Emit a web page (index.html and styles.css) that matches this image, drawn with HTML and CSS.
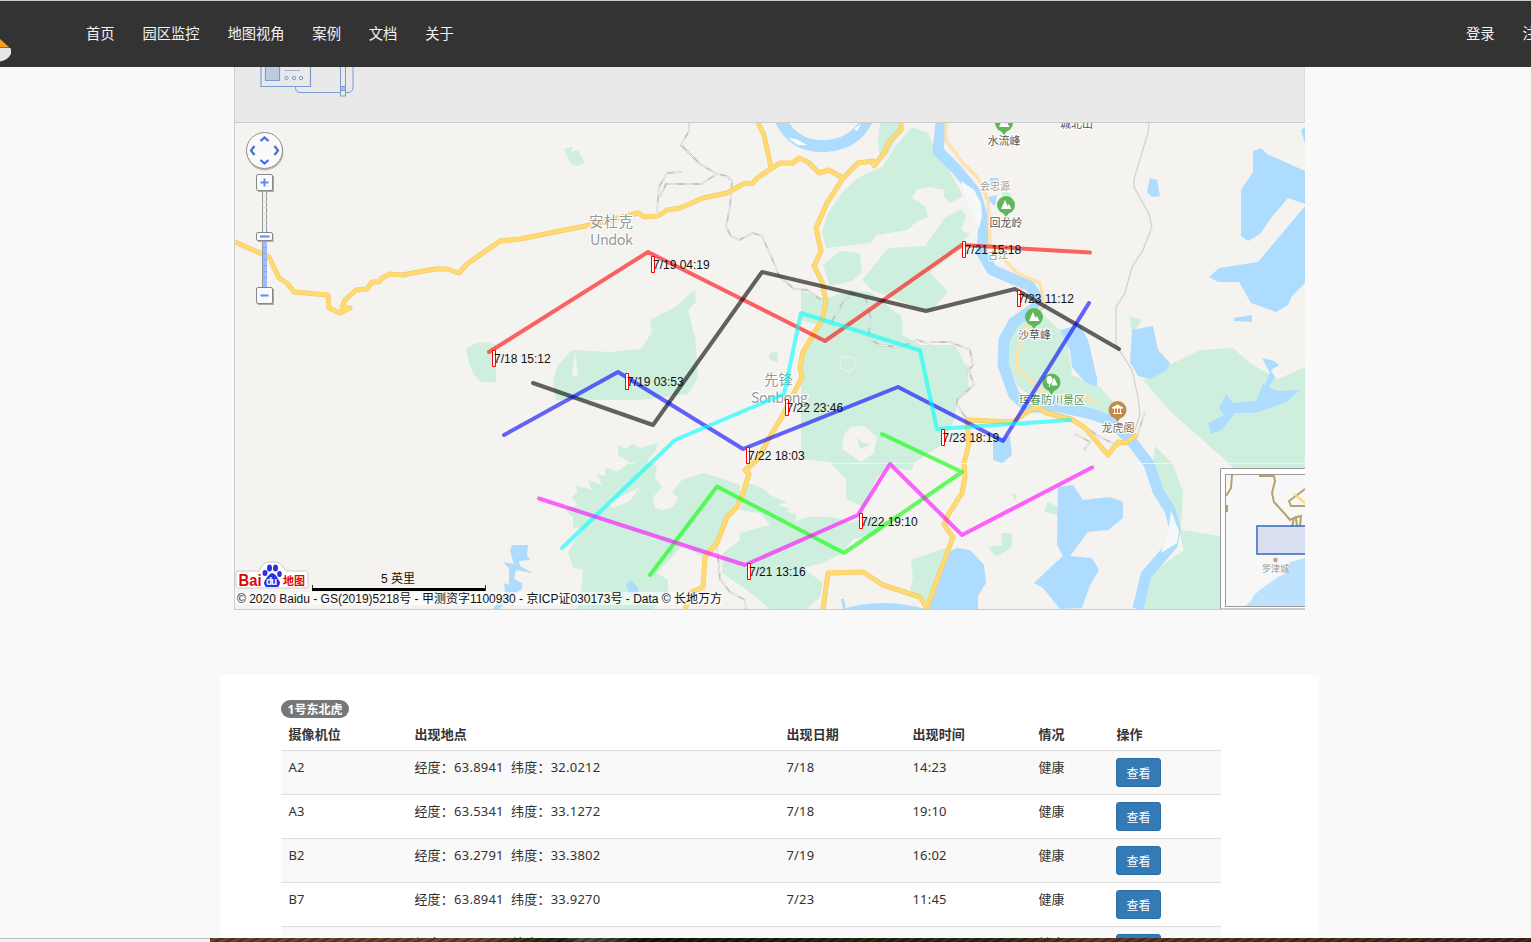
FILE: index.html
```html
<!DOCTYPE html>
<html lang="zh-CN">
<head>
<meta charset="utf-8">
<title>地图视角</title>
<link rel="stylesheet" href="styles.css">
</head>
<body>
<header class="navbar">
  <svg class="logo" width="12" height="67" viewBox="0 0 12 67"><path d="M0 39L9.500 47.500H0Z" fill="#ff9d16"/><path d="M0 48H10Q11 48 11 50V54Q8 60 0 61.500Z" fill="#e6e6e6"/></svg>
  <nav class="links"><a>首页</a><a>园区监控</a><a>地图视角</a><a>案例</a><a>文档</a><a>关于</a></nav>
  <nav class="links account"><a>登录</a><a>注册</a></nav>
</header>
<main>
  <section class="map-panel">
    <div class="banner">
      <svg width="110" height="55" viewBox="250 67 110 55" fill="none" stroke="#789bd2">
        <path d="M261 60V86.500H310.500V60M265.500 60V80.500H279.500V60" stroke-width="1.200"/><path d="M266 67H279V80H266Z" fill="#bacce1" stroke="none"/>
        <path d="M284.500 70.500H300" stroke="#9cb3da"/><circle cx="286.500" cy="78" r="1.700"/><circle cx="294" cy="78" r="1.700"/><circle cx="301" cy="78" r="1.700"/>
        <path d="M295.500 87V88Q296 92.500 300 92.500H340M345.500 92.500H348Q353 92 353 87V60M340.500 60V96H345.500V60M340.500 86.500H345.500M340.500 90.500H345.500"/>
        <path d="M341 87H345V90H341Z" fill="#a9c0e0" stroke="none"/>
      </svg>
    </div>
    <svg class="map" width="1070" height="486" viewBox="235 123 1070 486">
      <rect x="235" y="123" width="1070" height="486" fill="#f4f3ef"/>
      <g fill="#ceefdd">
        <path d="M564 149L573 147L571 152L578 150L585 163L578 166L571 164Z"/>
        <path d="M880 123H901L898 135L888 155L880 157L878 142Z"/>
        <path d="M912 127L928 133L932 143L945 160L951 174L963 196L950 203L943 195L945 190L930 187L917 189L912 198L926 207L928 217L918 221L907 230L877 235L870 243L826 248L822 232L828 213L843 192L858 178L883 166L895 147Z"/>
        <path d="M823 265L840 251L860 253L862 272L852 281L830 286Z"/>
        <path d="M873 267L888 248L925 246L945 218L961 209L966 216L961 230L970 234L943 263L930 272L948 292L930 312L905 303L872 290L862 280Z"/>
        <path d="M801 291L822 298L831 297L850 290L870 292L901 316L905 335L920 345L955 345L968 370L969 391L957 400L955 418L940 446L914 463L912 470L898 469L890 464L875 480L865 508L846 499V479L839 472L830 462L801 459V370L803 350L818 325L801 320Z"/>
        <path d="M846 525L862 518L890 522L875 535L848 540Z"/>
        <path d="M695 290L696 302L688 310L695 337L698 377L688 394L640 400H556L553 380L558 365L572 350L610 352L641 349L652 332L650 320L675 307Z"/>
        <path d="M466 349Q479 338 496 345V382H482Q470 376 466 349Z"/>
        <path d="M618 445L626 449L632 444L640 448L658 443L655 452L648 459V463L657 465L655 478L662 487L653 497L655 508L663 510L673 507L678 497L672 492L682 480L703 473L717 477L740 485V500L723 520L720 543L707 553L700 556L690 549L683 545L657 573L668 580V593L653 609H577L582 587L583 570L573 567L568 553L577 537L583 530L573 527V517L565 510L578 505L572 497L578 492L575 485L592 490L588 480L602 485L597 474L605 476L605 467L617 472L630 462L618 455Z"/>
        <path d="M748 483L762 488L770 495L787 502L778 505L790 509L785 511L797 515L795 522L807 517L830 517L845 520L858 533L842 553L823 563L803 568L823 583L820 597L807 609H770L743 587L722 573L723 553L740 540V533L770 525L760 513L740 510L743 497Z"/>
        <path d="M911 560L942 549L949 549L939 583L928 602L910 590L913 577Z"/>
        <path d="M769 354L777 351L778 363L769 359Z"/>
        <path d="M1001 185L1011 195L1015 210H1004Z"/>
        <path d="M1014 320L1040 312L1060 330L1068 346L1072 375L1100 387L1120 410L1115 418L1085 410L1040 405L1018 386L1005 362L1005 337Z"/>
        <path d="M1163 368L1200 350L1233 348L1251 364L1278 379L1305 367V468H1234L1170 411L1143 380Z"/>
        <path d="M1155 446L1172 463L1183 491L1181 530L1220 536V609H1144V586L1158 568L1184 550L1174 510L1152 466Z"/>
        <path d="M1129 316L1142 320L1132 334ZM1011 493L1017 495L1015 501ZM1048 502L1063 509L1059 516L1044 511ZM1001 533L1012 533V547L1000 555L995 556L988 547L1002 545Z"/>
      </g>
      <g fill="#f4f3ef">
        <path d="M850 427L864 426L877 437L874 453L861 462L842 449L844 435Z"/>
        <path d="M841 357H853L856 365L849 372L840 368Z" stroke="#ebeee5" stroke-width="1.500" fill="none"/>
        <path d="M575 352L578 375L572 377ZM622 496L640 487L630 501L613 508L608 503Z"/>
        <path d="M903 325L927 310L945 305L950 342L915 342L902 335Z"/>
      </g>
      <path d="M857 437L863 443L872 444L860 449Z" fill="#ceefdd"/>
      <g fill="#aedcfe">
        <path d="M1253 151L1261 148L1267 154L1305 171V204L1288 198L1271 218L1260 234L1248 241L1241 236V190L1253 172Z"/>
        <path d="M1305 206L1258 262L1219 268L1209 277L1218 282L1239 282L1251 303L1276 312L1288 305L1292 296L1305 283Z"/>
        <path d="M1150 178L1157 180L1160 196L1152 197L1147 192ZM1234 318L1252 315V322L1234 321ZM1301 130L1305 127V144Z"/>
        <path d="M1132 330L1153 326L1158 350L1170 363L1167 370L1150 379L1138 376L1130 362Z"/>
        <path d="M1060 330L1080 325L1088 340L1097 378L1097 387L1085 382L1072 367L1070 350Z"/>
        <path d="M1208 423L1224 415L1219 408L1226 394L1233 403L1256 401L1263 384L1277 391L1300 390L1286 402L1270 408L1255 413L1235 413L1222 430L1211 434Z"/>
        <path d="M1262 358L1274 361L1279 365L1271 370L1275 377L1268 388L1265 384L1270 373Z"/>
        <path d="M1058 487L1073 485L1083 500L1110 497L1123 502V518L1108 530L1088 532L1070 556L1092 558L1099 570L1090 585L1082 608L1060 609L1043 588L1034 583L1053 565L1063 556L1057 545Z"/>
        <path d="M926 609L937 580L948 552L957 548L970 550L984 565L986 583L978 596V609Z"/>
        <path d="M993 440L1010 436L1012 455L1002 463L993 460Z"/>
        <path d="M842 609Q882 597 926 609Z"/>
        <path d="M510 551L512 545H528L527 555L530 560L519 561L520 566L533 573L516 570L514 579L522 583V589L513 594L506 600L500 609H493L505 592L504 583L509 585V568L503 562L514 564Z"/>
        <path d="M626 584L631 580L639 589L635 597L630 597ZM841 599H844L846 609H843ZM990 178L998 178L999 186L990 190ZM984 198L997 195L995 206Z"/>
      </g>
      <path d="M780 119Q794 148 826 146Q856 144 868 118" fill="none" stroke="#aedcfe" stroke-width="12"/>
      <path d="M788 138L796 139L807 145H798ZM854 129L861 124L857 131Z" fill="#fff"/>
      <path d="M941 122L938 151L957 170L975 192L984 222L982 253L992 270L1030 286L1041 304L1014 322L1004 340L1003 365L1014 395L1028 407L1060 407L1088 413L1112 421L1133 443L1149 464L1158 491L1170 510L1175 529L1172 545L1146 575L1138 609" fill="none" stroke="#aedcfe" stroke-width="11" stroke-linejoin="round"/>
      <g fill="#f7f8f8"><path d="M961 181L974 190L981 203L982 216L979 229L969 206Z"/><path d="M1171 511L1179 531L1177 543L1161 553L1168 534Z"/></g>
      <g class="rails">
        <path id="rail" d="M689 123V131L681 145L700 164L717 174L727 176L732 181L730 207L726 227L731 236L739 240L753 233L762 236L777 270L779 276L794 289L807 290L823 301M657 212L659 187L667 173L682 172M660 197L666 184L701 184L717 174M823 325L831 323L843 302L852 293L866 299L871 319L868 338L880 345L900 347L917 340L930 344M930 342L950 342L970 350L973 365L967 372M967 365L974 385L957 400L957 405L966 418M717 547L720 579L730 592L745 600L746 609M1038 410L1070 417L1100 437L1119 446M1075 434L1090 442L1084 450M1145 411L1137 437"/>
        <use href="#rail" class="ties"/>
      </g>
      <path class="boundary" d="M1149 123L1148 133L1134 179V187L1149 214L1152 227L1143 250L1132 267L1125 293L1116 307V345L1132 370L1138 397L1140 415L1131 441"/>
      <g class="roads">
        <path id="roadA" d="M235 242L269 257L279 278L287 283L294 292L328 295L329 308L340 313L350 308H342L345 300L356 290L367 289L372 282L379 282L382 278L390 274L402 275L435 269L447 269L459 273L467 264L500 241L520 239L590 225L638 213L645 217L658 216L667 210L680 208L703 198L727 193L743 184L753 183L757 178L780 163L793 163L799 158L808 162L819 173L829 170L843 178L851 170L858 163L873 161L874 166L884 153L888 143L901 130V123M758 123L764 135L771 167M843 178L827 203L816 228L821 251L814 266L822 282L826 302L822 320L803 352L800 367L802 377L787 407L780 420L772 433L757 460L745 470L749 474L743 493L737 507L727 517L717 543L705 557L703 587L692 592L685 609M823 609L828 573L863 572L883 585L920 597L927 608L937 580L953 537L944 525L948 515L962 493L965 477L964 463L969 443L967 420L1013 422L1027 412L1037 407L1047 413L1073 420L1085 428L1108 455L1118 442L1125 443L1137 435"/>
        <use href="#roadA" class="road-core"/>
      </g>
      <path class="minor-edge" d="M946 123V140L963 163L978 178L988 200L990 243L1002 257L1017 273L1040 283L1044 303L1030 320L1018 350L1017 369L1033 383L1047 397L1067 395L1097 401"/>
      <path d="M235 463.500H635M830 463.500H1305" stroke="#fafaf7" opacity=".7"/>
      <g class="places">
        <g class="city"><text x="589" y="227" textLength="44">安杜克</text><text x="590" y="245" textLength="43">Undok</text><text x="764" y="385" textLength="29">先锋</text><text x="751" y="403" textLength="57">Sonbong</text></g>
        <text x="987.500" y="145">水流峰</text><text x="1060" y="128">城北山</text><text x="989.500" y="226.500">回龙岭</text><text x="1018" y="338.500">沙草峰</text>
        <text x="980" y="189.500" font-size="10" fill="#9b9b95">会忠源</text><text x="988" y="259" font-size="10" fill="#8f9a82">古江</text>
        <text x="1019" y="404" fill="#559257">珲春防川景区</text><text x="1101.500" y="432" fill="#806651">龙虎阁</text>
      </g>
      <defs><g id="park"><circle r="9" fill="#60b759"/><path d="M-3 8L0 12L3 8Z" fill="#60b759"/><path d="M-5 4L-1 -5L3 4ZM2 4L2 0L3 -1L5.500 4Z" fill="#fff"/></g></defs>
      <use href="#park" x="1004" y="123"/><use href="#park" x="1006" y="205"/><use href="#park" x="1034" y="317"/>
      <g><circle cx="1051.500" cy="382.500" r="9" fill="#60b759"/><path d="M1048.500 390.500L1051.500 395L1054.500 390.500Z" fill="#60b759"/><ellipse cx="1049.500" cy="380" rx="3" ry="4" fill="#fff"/><path d="M1049.500 380V387M1054 378.500L1057 385H1052Z" fill="#fff" stroke="#fff"/></g>
      <circle cx="1117.500" cy="410" r="9" fill="#c48b48"/><path d="M1114.500 417.500L1117.500 422L1120.500 417.500Z" fill="#c48b48"/><path d="M1112 408L1117.500 405L1123 408ZM1113 413.500H1122M1114.500 408V413M1117.500 408V413M1120.500 408V413" fill="#fff" stroke="#fff"/>
      <g class="tracks">
        <path stroke="#f00" d="M489 352L648 252L825 341L962 245L1090 252.500"/>
        <path stroke="#000" d="M533 383L653 425L762 272L926 311L1015 289L1119 349"/>
        <path stroke="#00f" d="M504 435L618 372L743 449L898 387L1003 441L1089 303"/>
        <path stroke="#0ff" d="M562 548L675 440L784 394L801 313L920 350.500L937 429L1070 420"/>
        <path stroke="#0f0" d="M650 575L717 486.500L844 553L962 472L882 434"/>
        <path stroke="#f0f" d="M539 498.500L745 565L858 515L890 464L962 535L1092 467.500"/>
      </g>
      <g class="flags">
        <path d="M651.500 256.500h3v16h-3zM492.500 350.500h3v16h-3zM625.500 373.500h3v16h-3zM785.500 399.500h3v16h-3zM746.500 447.500h3v16h-3zM859.500 513.500h3v15h-3zM747.500 563.500h3v16h-3zM962.500 241.500h3v16h-3zM1017.500 290.500h3v16h-3zM941.500 429.500h3v16h-3z"/>
        <text x="653" y="269">7/19 04:19</text><text x="494" y="363">7/18 15:12</text><text x="627" y="386">7/19 03:53</text><text x="786.500" y="412">7/22 23:46</text><text x="748" y="460">7/22 18:03</text><text x="861" y="526">7/22 19:10</text><text x="749" y="576">7/21 13:16</text><text x="964.500" y="254">7/21 15:18</text><text x="1018" y="303">7/23 11:12</text><text x="942.500" y="442">7/23 18:19</text>
      </g>
      <g class="control">
        <circle cx="265" cy="152" r="18.500" fill="#bbb" stroke="none"/><circle cx="264.500" cy="150.500" r="18" fill="#fafafa" stroke="#8f8f8f"/>
        <path d="M260.500 141L264.500 137.500L268.500 141M260.500 160L264.500 163.500L268.500 160M254.500 146L251 150.500L254.500 155M274.500 146L278 150.500L274.500 155" fill="none" stroke="#416fda" stroke-width="2.200"/>
        <rect x="262.500" y="190" width="4" height="98" fill="#f5f5f5" stroke="#999"/><path d="M263 241H267V287H263Z" fill="#9bbcff" stroke="none"/>
        <path d="M263 195.500H267M263 201.500H267M263 207.500H267M263 213.500H267M263 219.500H267M263 225.500H267" stroke="#ddd"/><path d="M263 247.500H267M263 253.500H267M263 259.500H267M263 265.500H267M263 271.500H267M263 277.500H267" stroke="#86a7e8"/>
        <path d="M258 176H274V192H258ZM258 289H274V305H258ZM258 234H273.500V242H258Z" fill="#aaa" stroke="none"/><rect x="256.500" y="174.500" width="16" height="16" rx="1.500"/><rect x="256.500" y="287.500" width="16" height="16" rx="1.500"/><rect x="256.500" y="232.500" width="16" height="8" rx="1.500"/>
        <path d="M260.500 182.500H268.500M264.500 178.500V186.500M260.500 295.500H268.500M260 236.500H269.500" stroke="#5b8cf0" stroke-width="2"/>
      </g>
      <g>
        <path d="M1220.500 609V468.500H1306V609Z" fill="#fff" stroke="#999"/><rect x="1225.500" y="474.500" width="90" height="132" fill="#f7f7f7" stroke="#999"/>
        <path d="M1245 606L1252 600L1254 595L1265 586L1278 577L1286 573L1290 562L1305 558V606Z" fill="#bce2fd"/>
        <path d="M1232 475L1231 488L1226 496M1227 505V512M1259 476H1274L1275 481L1272 493L1274 502L1285 514L1290 520L1294 518L1292 527M1297 527L1296 517L1301 516L1300 526M1305 489L1289 501L1291 506L1305 506" fill="none" stroke="#b4a36a" stroke-width="2"/>
        <path d="M1294 494L1305 503" stroke="#ffd66a" stroke-width="2"/><rect x="1257" y="526" width="60" height="28" fill="#d5ddef" fill-opacity=".9" stroke="#316bc0" stroke-width="1.500"/>
        <circle cx="1275.500" cy="560" r="2.300" fill="#d39978"/><text class="mini" x="1262" y="572">罗津城</text>
      </g>
      <g>
        <path d="M237 571H259L262 566Q265 561 272 562Q279 561 283 567L286 571H306Q308 572 308 575V586Q308 588 305 588H238Q236 587 236 584V573Q236 571 238 571Z" fill="#fff" stroke="#ccc"/>
        <g fill="#2932e1"><ellipse cx="265" cy="573" rx="2.500" ry="3"/><ellipse cx="269.500" cy="568" rx="2.500" ry="3.500"/><ellipse cx="275.500" cy="568" rx="2.500" ry="3.500"/><ellipse cx="279.500" cy="574" rx="2.300" ry="3"/><path d="M272 573Q276 574 278 579Q282 583 278 587H266Q262 583 266 579Q269 574 272 573Z"/></g>
        <text class="brand" x="238.500" y="586" font-size="16" textLength="23" lengthAdjust="spacingAndGlyphs">Bai</text><text class="brand du" x="266" y="585" font-size="10" textLength="11">du</text><text class="brand" x="283" y="585" font-size="11" textLength="22">地图</text>
      </g>
      <path d="M235 592H722V605H235Z" fill="#fff" opacity=".6"/>
      <path d="M312.500 585V591M485.500 585V591" stroke="#333"/><path d="M312 589.500H485" stroke="#000" stroke-width="3"/>
      <g class="mapinfo"><text x="381" y="583" textLength="34">5 英里</text><text x="237" y="603" textLength="485" lengthAdjust="spacingAndGlyphs">© 2020 Baidu - GS(2019)5218号 - 甲测资字1100930 - 京ICP证030173号 - Data © 长地万方</text></g>
    </svg>
  </section>
  <section class="card">
    <span class="badge">1号东北虎</span>
    <div class="table">
      <div class="row head"><span>摄像机位</span><span>出现地点</span><span>出现日期</span><span>出现时间</span><span>情况</span><span>操作</span></div>
      <div class="row"><span>A2</span><span>经度：63.8941&nbsp; 纬度：32.0212</span><span>7/18</span><span>14:23</span><span>健康</span><span><button>查看</button></span></div>
      <div class="row"><span>A3</span><span>经度：63.5341&nbsp; 纬度：33.1272</span><span>7/18</span><span>19:10</span><span>健康</span><span><button>查看</button></span></div>
      <div class="row"><span>B2</span><span>经度：63.2791&nbsp; 纬度：33.3802</span><span>7/19</span><span>16:02</span><span>健康</span><span><button>查看</button></span></div>
      <div class="row"><span>B7</span><span>经度：63.8941&nbsp; 纬度：33.9270</span><span>7/23</span><span>11:45</span><span>健康</span><span><button>查看</button></span></div>
      <div class="row"><span></span><span>经度：&nbsp;&nbsp;&nbsp;&nbsp;&nbsp;&nbsp;&nbsp;&nbsp;&nbsp;&nbsp;&nbsp;&nbsp;&nbsp;&nbsp;&nbsp; 纬度：</span><span></span><span></span><span>健康</span><span><button>查看</button></span></div>
    </div>
  </section>
</main>
<footer class="bottom"><div class="status"></div><div class="photo"></div></footer>
</body>
</html>
```
FILE: styles.css
```css
* { box-sizing: border-box; }
html, body { height: 100%; }
body { margin: 0; height: 942px; overflow: hidden; display: flex; flex-direction: column; background: #f9f9f9; color: #333; font: 13px/19px "Noto Sans", "Noto Sans CJK SC", sans-serif; }
.navbar { height: 67px; flex: none; background: #333; border-top: 1px solid #ccc; display: flex; overflow: hidden; }
.logo { flex: none; margin-top: -1px; }
.links { display: flex; gap: 27.800px; padding-left: 74px; font: 14.300px/64px "Noto Sans CJK SC", sans-serif; color: #f2f2f2; white-space: nowrap; }
.account { margin-left: auto; margin-right: -20px; padding: 0; }
main { flex: 1; min-height: 0; overflow: hidden; }
.map-panel { width: 1071px; margin-left: 234px; border-left: 1px solid #ccc; border-bottom: 1px solid #ccc; height: 543px; }
.banner { height: 56px; background: #e9e9e9; border-bottom: 1px solid #ccc; padding-left: 15px; border-right: 1px solid #ddd; }
.banner svg, .map { display: block; }
.card { width: 1099px; margin: 65px 0 0 220px; height: 300px; padding: 25px 98px 0 61px; background: #fff; }
.badge { display: block; width: 68px; height: 18px; border-radius: 9px; background: #777; color: #fff; font-weight: 700; font-size: 12px; line-height: 19px; text-align: center; white-space: nowrap; }
.table { letter-spacing: .23px; }
.row { display: grid; grid-template-columns: 126px 372px 126px 126px 78px 112px; height: 44px; border-top: 1px solid #ddd; padding: 7px 0 0 7.400px; }
.row:nth-child(even) { background: #f9f9f9; }
.row.head { height: 32px; border: 0; font-weight: 700; padding-top: 7px; letter-spacing: .15px; }
.row button { display: block; width: 45px; height: 29px; margin-left: -.4px; padding: 0; border: 1px solid #2e6da4; border-radius: 3px; background: #337ab7; color: #fff; font: 12px/27px "Noto Sans CJK SC", sans-serif; }
.bottom { height: 4px; flex: none; display: flex; }
.status { width: 210px; border-top: 1px solid #bbb; background: #f2f2f2; }
.photo { flex: 1; background: repeating-linear-gradient(155deg, rgba(0,0,0,.35) 0 1px, rgba(150,110,60,.12) 2px 3px, rgba(0,0,0,.15) 4px 5px), linear-gradient(90deg, #68462a 0, #704d30 270px, #34371a 310px, #22240f 355px, #53534b 370px, #45443e 400px, #13140c 430px, #25270f 650px, #2c2b16 780px, #5c3e28 880px, #3d291c 1321px); }
.rails { fill: none; stroke: #c4c4c0; stroke-width: 1.800; }
.rails .ties { stroke: #f7f7f4; stroke-width: 1; stroke-dasharray: 10 6; }
.boundary { fill: none; stroke: #d0d0cc; stroke-width: 1.200; }
.roads { fill: none; stroke: #f3c86e; stroke-width: 5; stroke-linejoin: round; }
.roads .road-core { stroke: #ffda70; stroke-width: 3.800; }
.minor-edge { fill: none; stroke: #ffe1ad; stroke-width: 3.200; stroke-linejoin: round; }
.places { font: 11px "Noto Sans CJK SC", sans-serif; fill: #555; stroke: #fff; stroke-width: 2px; paint-order: stroke; }
.city { font-size: 14.500px; fill: #999; }
.tracks path { fill: none; stroke-width: 4; stroke-linecap: round; stroke-linejoin: round; stroke-opacity: .6; }
.flags path { fill: #fff; stroke: #f00; }
.flags text { font: 12px "Liberation Sans", sans-serif; fill: #111; }
.control { fill: #fafafa; stroke: #888; }
.mini { font: 9px "Noto Sans CJK SC", sans-serif; fill: #999; }
.brand { font-family: "Liberation Sans", "Noto Sans CJK SC", sans-serif; font-weight: 700; fill: #e10602; }
.brand.du { fill: #fff; }
.mapinfo { font: 12px "Liberation Sans", "Noto Sans CJK SC", sans-serif; fill: #111; }
```
